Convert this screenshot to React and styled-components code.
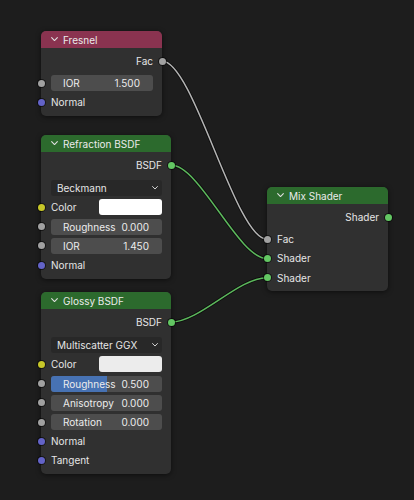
import React from "react";
import styled, { createGlobalStyle } from "styled-components";

const GlobalStyle = createGlobalStyle`
  html, body {
    margin: 0;
    padding: 0;
    background: #1d1d1d;
  }
  body {
    font-family: Inter, "Noto Sans", "DejaVu Sans", sans-serif;
    -webkit-font-smoothing: antialiased;
  }
`;

const SOCKET = {
  float: "#a1a1a1",
  shader: "#63c763",
  color: "#c7c729",
  vector: "#6363c7",
};

const Canvas = styled.div`
  position: relative;
  width: 414px;
  height: 500px;
  overflow: hidden;
  background: #1d1d1d;
`;

const Wires = styled.svg`
  position: absolute;
  left: 0;
  top: 0;
  width: 414px;
  height: 500px;
`;

const Node = styled.div`
  position: absolute;
  left: ${(p) => p.$x}px;
  top: ${(p) => p.$y}px;
  width: ${(p) => p.$w}px;
  display: flex;
  flex-direction: column;
  background: #303030;
  border-radius: 5px;
  box-shadow: 0 1px 5px rgba(0, 0, 0, 0.55);
  color: #e6e6e6;
  font-size: 10px;
`;

const Header = styled.div`
  height: 17px;
  display: flex;
  align-items: center;
  gap: 5px;
  padding-left: 10px;
  background: ${(p) => p.$color};
  border-radius: 5px 5px 0 0;
  color: #ebebeb;
  font-size: 10px;
`;

const Body = styled.div`
  display: flex;
  flex-direction: column;
  padding: 3.5px 0 4px;
`;

const Outputs = styled.div`
  display: flex;
  flex-direction: column;
  margin-bottom: 3px;
`;

const Row = styled.div`
  position: relative;
  height: 19.2px;
  display: flex;
  align-items: center;
  justify-content: ${(p) => (p.$out ? "flex-end" : "flex-start")};
  padding: 0 9px 0 10px;
  margin-top: ${(p) => (p.$menu ? 1 : 0)}px;
`;

const Socket = styled.span`
  position: absolute;
  top: 50%;
  ${(p) => (p.$out ? "right" : "left")}: -3.5px;
  width: 7px;
  height: 7px;
  margin-top: -3.5px;
  border-radius: 50%;
  background: ${(p) => p.$color};
  box-shadow: 0 0 0 1px rgba(0, 0, 0, 0.55);
  z-index: 2;
`;

const Label = styled.span`
  flex: ${(p) => (p.$grow ? 1 : "none")};
  white-space: nowrap;
`;

const Field = styled.div`
  position: relative;
  flex: 1;
  height: 16px;
  display: flex;
  align-items: center;
  justify-content: space-between;
  padding: 0 13px 0 12px;
  background: #4d4d4d;
  border-radius: 3px;
  overflow: hidden;
  color: #ececec;
`;

const Fill = styled.div`
  position: absolute;
  left: 0;
  top: 0;
  bottom: 0;
  background: #4772b3;
`;

const FieldText = styled.span`
  position: relative;
  white-space: nowrap;
`;

const Menu = styled.div`
  flex: 1;
  height: 16px;
  display: flex;
  align-items: center;
  justify-content: space-between;
  padding: 0 4px 0 6px;
  background: #282828;
  border-radius: 3px;
  color: #e6e6e6;
`;

const Swatch = styled.div`
  width: 63px;
  height: 16px;
  border-radius: 3px;
  background: ${(p) => p.$color};
`;

const Chevron = ({ size = 7 }) => (
  <svg width={size} height={size * 0.62} viewBox="0 0 7 4.4" fill="none">
    <path d="M0.6 0.6 L3.5 3.6 L6.4 0.6" stroke="#e0e0e0" strokeWidth="1.1" strokeLinecap="round" strokeLinejoin="round" />
  </svg>
);

const Output = ({ label, kind }) => (
  <Row $out>
    <Label>{label}</Label>
    <Socket $out $color={SOCKET[kind]} />
  </Row>
);

const Input = ({ label, kind }) => (
  <Row>
    <Socket $color={SOCKET[kind]} />
    <Label>{label}</Label>
  </Row>
);

const Slider = ({ label, value, fill = 0 }) => (
  <Row>
    <Socket $color={SOCKET.float} />
    <Field>
      {fill > 0 && <Fill style={{ width: `${fill * 100}%` }} />}
      <FieldText>{label}</FieldText>
      <FieldText>{value}</FieldText>
    </Field>
  </Row>
);

const Dropdown = ({ value }) => (
  <Row $menu>
    <Menu>
      <span>{value}</span>
      <Chevron size={6} />
    </Menu>
  </Row>
);

const ColorInput = ({ color }) => (
  <Row>
    <Socket $color={SOCKET.color} />
    <Label $grow>Color</Label>
    <Swatch $color={color} />
  </Row>
);

const ShaderNode = ({ title, color, x, y, w, outputs, children }) => (
  <Node $x={x} $y={y} $w={w}>
    <Header $color={color}>
      <Chevron />
      <span>{title}</span>
    </Header>
    <Body>
      <Outputs>
        {outputs.map((o, i) => (
          <Output key={i} label={o.label} kind={o.kind} />
        ))}
      </Outputs>
      {children}
    </Body>
  </Node>
);

const INPUT_RED = "#8a3350";
const SHADER_GREEN = "#2c6a2d";

// links between sockets: [from, to, colour]
const LINKS = [
  { a: [162, 61.1], b: [267, 239.3], color: "#b4b4b4" },
  { a: [171, 165.1], b: [267, 258.5], color: "#5cb85c" },
  { a: [171, 322.1], b: [267, 277.7], color: "#5cb85c" },
];

const noodle = ({ a, b }) => {
  const h = Math.abs(b[0] - a[0]) * 0.3;
  return `M${a[0]} ${a[1]} C${a[0] + h} ${a[1]} ${b[0] - h} ${b[1]} ${b[0]} ${b[1]}`;
};

export default function App() {
  return (
    <>
      <GlobalStyle />
      <Canvas>
        <Wires viewBox="0 0 414 500">
          {LINKS.map((l, i) => (
            <g key={i} fill="none" strokeLinecap="round">
              <path d={noodle(l)} stroke="rgba(0,0,0,0.55)" strokeWidth="3.2" />
              <path d={noodle(l)} stroke={l.color} strokeWidth="1.5" />
            </g>
          ))}
        </Wires>

        <ShaderNode title="Fresnel" color={INPUT_RED} x={41} y={31} w={121} outputs={[{ label: "Fac", kind: "float" }]}>
          <Slider label="IOR" value="1.500" />
          <Input label="Normal" kind="vector" />
        </ShaderNode>

        <ShaderNode title="Refraction BSDF" color={SHADER_GREEN} x={41} y={135} w={130} outputs={[{ label: "BSDF", kind: "shader" }]}>
          <Dropdown value="Beckmann" />
          <ColorInput color="#ffffff" />
          <Slider label="Roughness" value="0.000" />
          <Slider label="IOR" value="1.450" />
          <Input label="Normal" kind="vector" />
        </ShaderNode>

        <ShaderNode title="Glossy BSDF" color={SHADER_GREEN} x={41} y={292} w={130} outputs={[{ label: "BSDF", kind: "shader" }]}>
          <Dropdown value="Multiscatter GGX" />
          <ColorInput color="#ececec" />
          <Slider label="Roughness" value="0.500" fill={0.5} />
          <Slider label="Anisotropy" value="0.000" />
          <Slider label="Rotation" value="0.000" />
          <Input label="Normal" kind="vector" />
          <Input label="Tangent" kind="vector" />
        </ShaderNode>

        <ShaderNode title="Mix Shader" color={SHADER_GREEN} x={267} y={187} w={121} outputs={[{ label: "Shader", kind: "shader" }]}>
          <Input label="Fac" kind="float" />
          <Input label="Shader" kind="shader" />
          <Input label="Shader" kind="shader" />
        </ShaderNode>
      </Canvas>
    </>
  );
}
